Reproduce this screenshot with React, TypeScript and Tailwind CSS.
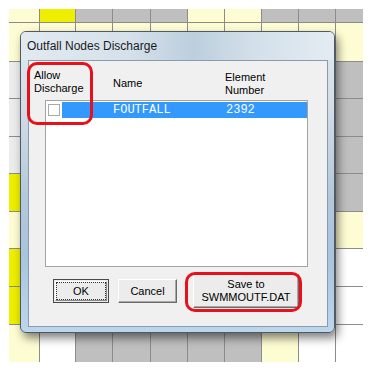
const font = { fontFamily: '"Liberation Sans", Arial, sans-serif' };

type Cell = 'LY' | 'Y' | 'G' | 'W' | 'P';

// background sheet, rows top to bottom; the middle is hidden by the dialog
const sheet: Cell[][] = [
  ['LY', 'Y', 'G', 'G', 'G', 'LY', 'LY', 'G', 'G', 'G'],
  ['LY', 'LY', 'LY', 'LY', 'LY', 'LY', 'LY', 'LY', 'LY', 'LY'],
  ['P', 'W', 'W', 'W', 'W', 'W', 'W', 'W', 'W', 'G'],
  ['P', 'W', 'W', 'W', 'W', 'W', 'W', 'W', 'W', 'G'],
  ['P', 'W', 'W', 'W', 'W', 'W', 'W', 'W', 'W', 'G'],
  ['Y', 'W', 'W', 'W', 'W', 'W', 'W', 'W', 'W', 'G'],
  ['LY', 'W', 'W', 'W', 'W', 'W', 'W', 'W', 'W', 'LY'],
  ['Y', 'W', 'W', 'W', 'W', 'W', 'W', 'W', 'W', 'W'],
  ['Y', 'W', 'W', 'W', 'W', 'W', 'W', 'W', 'W', 'W'],
  ['LY', 'W', 'G', 'G', 'G', 'G', 'G', 'LY', 'W', 'W'],
];

const cellColor: Record<Cell, string> = {
  LY: 'bg-[#fefcd2]',
  Y: 'bg-[#eeee00]',
  G: 'bg-[#bfbfbf]',
  W: 'bg-white',
  P: 'bg-[#ececec]',
};

function Sheet() {
  return (
    <div className="grid grid-cols-[31px_36px_37px_38px_37px_37px_37px_37px_37px_27px] grid-rows-[14px_39px_37px_38px_37px_38px_37px_38px_38px_37px]">
      {sheet.map((row, r) =>
        row.map((cell, c) => (
          <div
            key={`${r}-${c}`}
            className={`${cellColor[cell]} ${c < 9 ? 'border-r border-r-[#8c8c8c]' : ''} ${
              r < 9 ? 'border-b border-b-[#8c8c8c]' : ''
            }`}
          />
        )),
      )}
    </div>
  );
}

function Button({
  children,
  isDefault,
  className,
}: {
  children: React.ReactNode;
  isDefault?: boolean;
  className: string;
}) {
  if (isDefault) {
    return (
      <div className={`flex border border-[#4a4a4a] bg-[#ececec] p-[1px] ${className}`}>
        <div className="flex flex-1 items-center justify-center border border-t-white border-l-white border-r-[#8a8a8a] border-b-[#8a8a8a]">
          <div className="flex h-full w-full items-center justify-center border border-dotted border-[#333]">
            {children}
          </div>
        </div>
      </div>
    );
  }

  return (
    <div
      className={`flex flex-col items-center justify-center border border-t-white border-l-white border-r-[#6a6a6a] border-b-[#6a6a6a] bg-[#ececec] leading-[13px] shadow-[inset_-1px_-1px_0_#a8a8a8] ${className}`}
    >
      {children}
    </div>
  );
}

export default function App() {
  return (
    <div className="relative h-[372px] w-[372px] overflow-hidden bg-white pl-[9px] pt-[9px]" style={font}>
      <Sheet />

      {/* dialog window */}
      <div className="absolute left-[20px] top-[31px] flex h-[302px] w-[315px] flex-col rounded-[6px] border border-[#4e5964] bg-[linear-gradient(180deg,#dfe8f0_0%,#d2dde7_25%,#b3c8db_55%,#a9c4de_75%,#bcd6ee_100%)] shadow-[3px_5px_10px_rgba(0,0,0,0.5)]">
        <div className="flex h-[28px] items-center rounded-t-[5px] bg-[linear-gradient(90deg,#e2eaf1_0%,#d4e0ea_35%,#bccfdd_55%,#d3e0ea_75%,#e4ecf2_100%)] pl-[6px] text-[12px] text-[#1b1b1b]">
          Outfall Nodes Discharge
        </div>

        <div className="mb-[5px] ml-[7px] mr-[6px] flex flex-1 flex-col border border-[#8c9bab] bg-[#f0f0f0] text-[11px] text-black">
          <div className="flex h-[39px] items-start pl-[5px] leading-[13px]">
            <div className="w-[79px] pt-[8px]">
              <div>Allow</div>
              <div>Discharge</div>
            </div>
            <div className="w-[112px] pt-[16px]">Name</div>
            <div className="pt-[10px]">
              <div>Element</div>
              <div>Number</div>
            </div>
          </div>

          <div className="ml-[16px] h-[167px] w-[263px] border border-[#a3a3a3] bg-white pt-px">
            <div className="flex h-[16px] items-center">
              <div className="ml-[2px] h-[12px] w-[12px] border border-[#a9a9a9] bg-white" />
              <div
                className="ml-[2px] flex h-full flex-1 items-center bg-[#3399ff] pl-[51px] text-[12px] text-white"
                style={{ fontFamily: '"Liberation Mono", "Courier New", monospace' }}
              >
                <span className="w-[113px]">FOUTFALL</span>
                <span>2392</span>
              </div>
            </div>
          </div>

          <div className="flex h-[48px] items-center pl-[24px]">
            <Button isDefault className="h-[24px] w-[56px]">
              OK
            </Button>
            <Button className="ml-[9px] h-[24px] w-[59px]">Cancel</Button>
            <Button className="ml-[16px] h-[34px] w-[106px]">
              <span>Save to</span>
              <span>SWMMOUTF.DAT</span>
            </Button>
          </div>
        </div>
      </div>

      {/* red annotation frames */}
      <div className="absolute left-[27px] top-[62px] h-[63px] w-[66px] rounded-[10px] border-[3px] border-[#e8101a]" />
      <div className="absolute left-[185px] top-[272px] h-[40px] w-[117px] rounded-[10px] border-[3px] border-[#e8101a]" />
    </div>
  );
}
